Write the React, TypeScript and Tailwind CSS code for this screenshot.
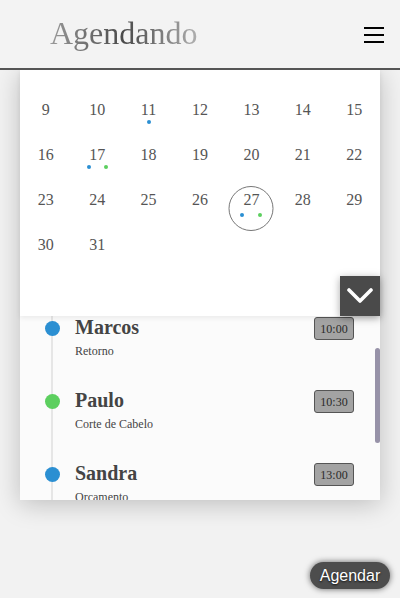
import React from "react";

type Day = { n: number; dots?: string[]; selected?: boolean };

const BLUE = "bg-[#2b8fd2]";
const GREEN = "bg-[#5ccf5f]";

const days: Day[] = [
  { n: 9 }, { n: 10 }, { n: 11, dots: [BLUE] }, { n: 12 }, { n: 13 }, { n: 14 }, { n: 15 },
  { n: 16 }, { n: 17, dots: [BLUE, GREEN] }, { n: 18 }, { n: 19 }, { n: 20 }, { n: 21 }, { n: 22 },
  { n: 23 }, { n: 24 }, { n: 25 }, { n: 26 }, { n: 27, dots: [BLUE, GREEN], selected: true }, { n: 28 }, { n: 29 },
  { n: 30 }, { n: 31 },
];

const items = [
  { name: "Marcos", desc: "Retorno", time: "10:00", color: BLUE },
  { name: "Paulo", desc: "Corte de Cabelo", time: "10:30", color: GREEN },
  { name: "Sandra", desc: "Orcamento", time: "13:00", color: BLUE },
];

export default function App() {
  return (
    <div className="min-h-[598px] bg-[#f2f2f2] font-['Liberation_Serif',serif]">
      <header className="h-[70px] border-b-2 border-[#555] bg-[#f3f3f3] flex items-center justify-between pl-[50px] pr-4 relative z-20">
        <span className="text-[32px] leading-none pb-[2px] bg-gradient-to-r from-[#9a9a9a] via-[#4a4a4a] to-[#b0b0b0] bg-clip-text text-transparent">
          Agendando
        </span>
        <div className="flex flex-col gap-[5px] w-5 mt-[1px]">
          <span className="block h-[2px] bg-black" />
          <span className="block h-[2px] bg-black" />
          <span className="block h-[2px] bg-black" />
        </div>
      </header>

      <main className="mx-5 bg-white shadow-[0_4px_24px_rgba(0,0,0,0.22)]">
        <section className="relative z-10 h-[246px] bg-white pt-[30px] shadow-[0_2px_5px_rgba(0,0,0,0.07)]">
          <div className="grid grid-cols-7 auto-rows-[45px]">
            {days.map((d) => (
              <div key={d.n} className="relative flex flex-col items-center text-[#555]">
                {d.selected && (
                  <div className="absolute top-[-4px] left-1/2 -translate-x-1/2 w-[45px] h-[45px] rounded-full border border-[#777]" />
                )}
                <span className="text-[16px] leading-[20px]">{d.n}</span>
                {d.dots && (
                  <div className={`flex ${d.selected ? "gap-[14px] mt-[3px]" : "gap-[13px]"}`}>
                    {d.dots.map((c, i) => (
                      <span key={i} className={`block w-[4px] h-[4px] rounded-full ${c}`} />
                    ))}
                  </div>
                )}
              </div>
            ))}
          </div>
          <button className="absolute right-0 bottom-0 w-10 h-10 bg-[#4a4a4a] flex items-center justify-center shadow-[0_2px_8px_rgba(0,0,0,0.35)]">
            <svg width="26" height="16" viewBox="0 0 26 16" fill="none">
              <path d="M2 2 L13 13 L24 2" stroke="white" strokeWidth="3.6" strokeLinecap="round" strokeLinejoin="round" />
            </svg>
          </button>
        </section>

        <section className="relative h-[184px] overflow-hidden bg-[#fbfbfb] pr-[26px]">
          <div className="absolute left-[31px] top-0 bottom-0 w-[2px] bg-[#e6e6e6]" />
          <div className="absolute right-0 top-[32px] w-[5px] h-[95px] rounded-full bg-[#9792a8]" />
          {items.map((it) => (
            <div key={it.name} className="relative h-[73px] flex pl-[25px]">
              <span className={`block w-[15px] h-[15px] rounded-full mt-[5px] shrink-0 ${it.color}`} />
              <div className="ml-[15px] flex-1">
                <div className="text-[20px] leading-[22px] font-bold text-[#444]">{it.name}</div>
                <div className="text-[12px] leading-[16px] mt-[5px] text-[#444]">{it.desc}</div>
              </div>
              <div className="mt-[1px] w-[40px] h-[23px] flex items-center justify-center bg-[#a3a3a3] border border-[#555] rounded-[3px] text-[12px] font-normal text-[#2a2a2a]">
                {it.time}
              </div>
            </div>
          ))}
        </section>
      </main>

      <div className="flex justify-end pr-[10px] mt-[62px]">
        <button className="w-[80px] h-[27px] rounded-full bg-[#4d4d4d] text-white text-[16px] leading-none font-['Liberation_Sans',sans-serif] shadow-[0_0_6px_rgba(0,0,0,0.6)] [text-shadow:0_1px_2px_rgba(0,0,0,0.8)]">
          Agendar
        </button>
      </div>
    </div>
  );
}
